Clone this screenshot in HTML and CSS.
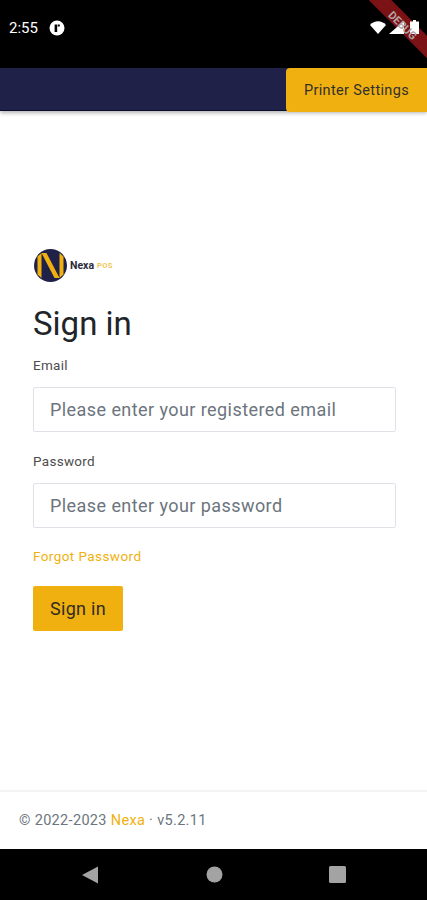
FILE: index.html
```html
<!DOCTYPE html>
<html lang="en">
<head>
  <meta charset="UTF-8">
  <title>Nexa POS - Sign in</title>
  <meta name="viewport" content="width=device-width, initial-scale=1.0">
  <link rel="stylesheet" href="styles.css">
</head>
<body>
  <div class="screen">
    <div class="debug-band"></div>

    <div class="status-bar">
      <div class="status-left">
        <span class="time">2:55</span>
        <svg class="status-app" width="16" height="16" viewBox="0 0 16 16">
          <circle cx="8" cy="8" r="7.5" fill="#fff"/>
          <path d="M5.6 12V4.4h2.6V12zM8.8 4.4h2v2.2h-2z" fill="#000"/>
        </svg>
      </div>
      <div class="status-right">
        <svg width="16" height="13" viewBox="0 0 16 13"><path d="M0 4C4.400-1 11.600-1 16 4L8 13z" fill="#fff"/></svg>
        <svg width="15" height="13" viewBox="0 0 15 13"><path d="M15 0v13H0z" fill="#fff"/></svg>
        <svg class="battery" width="9" height="14" viewBox="0 0 9 14"><path d="M3 0h3v1.500h3V14H0V1.500h3z" fill="#fff"/></svg>
      </div>
    </div>

    <div class="debug-text">DEBUG</div>

    <header class="app-bar">
      <button class="printer-btn">Printer Settings</button>
    </header>

    <main class="content">
      <div class="logo">
        <svg width="33" height="33" viewBox="0 0 33 33">
          <circle cx="16.500" cy="16.500" r="16.500" fill="#1f2148"/>
          <path d="M3.500 7.500L7.500 4V29L3.500 25.500zM25.500 4L29.500 7.500V25.500L25.500 29z" fill="#f0b110"/>
          <path d="M7.500 4h5L25.500 29h-5z" fill="#f0b110"/>
        </svg>
        <span class="logo-name">Nexa</span>
        <span class="logo-pos">POS</span>
      </div>

      <h1 class="title">Sign in</h1>

      <label class="field-label" for="email">Email</label>
      <input class="field-input" id="email" type="text" placeholder="Please enter your registered email">

      <label class="field-label field-label-second" for="password">Password</label>
      <input class="field-input" id="password" type="text" placeholder="Please enter your password">

      <a class="forgot" href="#">Forgot Password</a>

      <button class="signin-btn">Sign in</button>
    </main>

    <footer class="footer">
      © 2022-2023 <span class="brand">Nexa</span> · v5.2.11
    </footer>

    <nav class="nav-bar">
      <svg width="18" height="18" viewBox="0 0 18 18"><path d="M17 0.500v17L1 9z" fill="#a3a3a3"/></svg>
      <svg width="17" height="17" viewBox="0 0 17 17"><circle cx="8.500" cy="8.500" r="8" fill="#a3a3a3"/></svg>
      <svg width="17" height="17" viewBox="0 0 17 17"><rect width="17" height="17" rx="1.500" fill="#a3a3a3"/></svg>
    </nav>
  </div>
</body>
</html>
```

FILE: styles.css
```css
* {
  box-sizing: border-box;
}
body {
  margin: 0;
  font-family: Roboto, sans-serif;
  background: #ffffff;
  color: #212529;
}
.screen {
  position: relative;
  width: 427px;
  height: 900px;
  overflow: hidden;
  display: flex;
  flex-direction: column;
}
.status-bar {
  height: 68px;
  flex-shrink: 0;
  color: #ffffff;
  display: flex;
  justify-content: space-between;
  align-items: flex-start;
  padding: 20px 8px 0 9px;
  position: relative;
  z-index: 1;
}
.status-left {
  display: flex;
  align-items: center;
  gap: 11px;
}
.time {
  font-size: 15px;
  line-height: 16px;
}
.status-right {
  display: flex;
  align-items: flex-end;
  gap: 3px;
}
.battery {
  margin-left: 3px;
}
/* band sits under the status icons, the word sits over them */
.debug-band {
  position: absolute;
  top: 0;
  left: 0;
  width: 100%;
  height: 68px;
  background: #000000;
  overflow: hidden;
}
.debug-band::after {
  content: "";
  position: absolute;
  top: 15px;
  right: -21px;
  width: 90px;
  height: 16px;
  transform: rotate(45deg);
  background: #7a1216;
}
.debug-text {
  position: absolute;
  top: 18px;
  right: -20px;
  width: 90px;
  height: 16px;
  transform: rotate(45deg);
  z-index: 2;
  color: #b5a3a3;
  font-size: 11px;
  font-weight: 700;
  line-height: 16px;
  text-align: center;
}
.app-bar {
  height: 43px;
  flex-shrink: 0;
  background: #1f2148;
  border-bottom: 1px solid #0b0b30;
  box-shadow: 0 2px 4px rgba(0, 0, 0, 0.3);
  display: flex;
  justify-content: flex-end;
  position: relative;
}
.printer-btn {
  width: 141px;
  height: 44px;
  border: none;
  border-radius: 4px 0 0 4px;
  background: #f0b110;
  color: #33302a;
  font-family: inherit;
  font-size: 14.500px;
  letter-spacing: 0.35px;
  padding: 0;
}
.content {
  flex: 1;
  padding: 138px 31px 0 33px;
  display: flex;
  flex-direction: column;
  align-items: flex-start;
}
.logo {
  display: flex;
  align-items: center;
  height: 33px;
  margin-left: 1px;
}
.logo-name {
  margin-left: 3px;
  font-size: 10.500px;
  font-weight: 700;
  color: #2b2b3a;
}
.logo-pos {
  margin-left: 3px;
  font-size: 7.500px;
  font-weight: 700;
  letter-spacing: 0.3px;
  color: #f0c656;
}
.title {
  margin: 20px 0 0;
  font-size: 33px;
  font-weight: 400;
  line-height: 44px;
  color: #212529;
}
.field-label {
  margin-top: 11px;
  font-size: 13.500px;
  line-height: 17px;
  letter-spacing: 0.3px;
  color: #4d4d4d;
}
.field-label-second {
  margin-top: 21px;
}
.field-input {
  width: 100%;
  height: 45px;
  margin-top: 13px;
  padding: 0 16px;
  border: 1px solid #dee2e6;
  border-radius: 2px;
  background: #ffffff;
  font-family: inherit;
  font-size: 18px;
  letter-spacing: 0.43px;
  color: #212529;
}
.field-input::placeholder {
  color: #6c757d;
  opacity: 1;
}
.forgot {
  margin-top: 20px;
  font-size: 13.500px;
  line-height: 17px;
  letter-spacing: 0.42px;
  color: #f0b110;
  text-decoration: none;
}
.signin-btn {
  width: 90px;
  height: 45px;
  margin-top: 21px;
  border: none;
  border-radius: 2px;
  background: #f0b110;
  color: #2f2b20;
  font-family: inherit;
  font-size: 18px;
  letter-spacing: 0.3px;
  padding: 0;
}
.footer {
  height: 59px;
  flex-shrink: 0;
  border-top: 2px solid #f3f3f3;
  padding: 19px 0 0 19px;
  font-size: 14.500px;
  line-height: 20px;
  letter-spacing: 0.33px;
  color: #6c757d;
}
.brand {
  color: #f0b110;
}
.nav-bar {
  height: 51px;
  flex-shrink: 0;
  background: #000000;
  display: flex;
  align-items: center;
  justify-content: space-between;
  padding: 0 81px 0 81px;
}
```
